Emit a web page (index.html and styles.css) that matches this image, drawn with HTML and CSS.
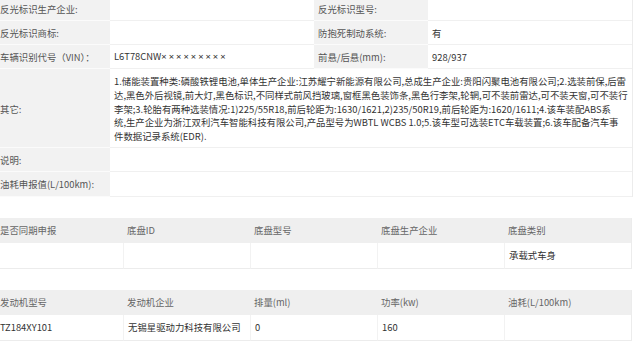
FILE: index.html
```html
<!DOCTYPE html>
<html lang="zh-CN">
<head>
<meta charset="utf-8">
<link rel="stylesheet" href="styles.css">
</head>
<body>
<div class="page">
  <table class="info">
    <colgroup><col class="c-l"><col class="c-v"><col class="c-l"><col class="c-v"></colgroup>
    <tr><td class="lab">反光标识生产企业:</td><td class="val"></td><td class="lab">反光标识型号:</td><td class="val"></td></tr>
    <tr><td class="lab">反光标识商标:</td><td class="val"></td><td class="lab">防抱死制动系统:</td><td class="val">有</td></tr>
    <tr><td class="lab">车辆识别代号（VIN）：</td><td class="val">L6T78CNW<span class="mask">×××××××××</span></td><td class="lab">前悬/后悬(mm):</td><td class="val">928/937</td></tr>
    <tr class="tall"><td class="lab">其它:</td><td class="val multi" colspan="3">1.储能装置种类:磷酸铁锂电池,单体生产企业:江苏耀宁新能源有限公司,总成生产企业:贵阳闪聚电池有限公司;2.选装前保,后雷<br>达,黑色外后视镜,前大灯,黑色标识,不同样式前风挡玻璃,窗框黑色装饰条,黑色行李架,轮辋,可不装前雷达,可不装天窗,可不装行<br>李架;3.轮胎有两种选装情况:1)225/55R18,前后轮距为:1630/1621,2)235/50R19,前后轮距为:1620/1611;4.该车装配ABS系<br>统,生产企业为浙江双利汽车智能科技有限公司,产品型号为WBTL WCBS 1.0;5.该车型可选装ETC车载装置;6.该车配备汽车事<br>件数据记录系统(EDR).</td></tr>
    <tr class="wide"><td class="lab">说明:</td><td class="val" colspan="3"></td></tr>
    <tr class="wide"><td class="lab">油耗申报值(L/100km):</td><td class="val" colspan="3"></td></tr>
  </table>

  <table class="grid">
    <tr class="head"><td>是否同期申报</td><td>底盘ID</td><td>底盘型号</td><td>底盘生产企业</td><td>底盘类别</td></tr>
    <tr class="data"><td></td><td></td><td></td><td></td><td>承载式车身</td></tr>
  </table>

  <table class="grid">
    <tr class="head"><td>发动机型号</td><td>发动机企业</td><td>排量(ml)</td><td>功率(kw)</td><td>油耗(L/100km)</td></tr>
    <tr class="data"><td>TZ184XY101</td><td>无锡星驱动力科技有限公司</td><td>0</td><td>160</td><td></td></tr>
  </table>
</div>
</body>
</html>
```

FILE: styles.css
```css
html, body {
  margin: 0;
  padding: 0;
  background: #fff;
}

body {
  font-family: "Noto Sans CJK SC", "Noto Sans", sans-serif;
  font-size: 9.4px;
  color: #333;
  overflow: hidden;
}

.page {
  width: 636px;
  margin: -3px 0 0 -4px;
  display: flex;
  flex-direction: column;
  gap: 21px;
}

table {
  width: 636px;
  table-layout: fixed;
  border-collapse: separate;
  border-spacing: 0;
  border-right: 1px solid #ececec;
}

td {
  padding: 0 4px;
  vertical-align: middle;
  white-space: nowrap;
  overflow: hidden;
  line-height: 14px;
}

.c-l { width: 114px; }
.c-v { width: 204px; }

.info td {
  height: 23px;
  border-bottom: 1px solid #f0f0f0;
}

.info .lab {
  background: #f2f2f2;
  color: #555;
  border-bottom: 1px solid #fbfbfb;
}

.info .val {
  color: #333;
}

.mask {
  font-family: "Noto Sans", sans-serif;
  letter-spacing: 2px;
}

.info .tall td {
  height: auto;
  padding-top: 6px;
  padding-bottom: 3px;
}

.info .multi {
  line-height: 13.8px;
}

.info .wide td {
  height: 23.5px;
}

.grid .head td {
  background: #efefef;
  color: #666;
  height: 25px;
}

.grid .data td {
  height: 25px;
  color: #333;
  border-bottom: 1px solid #ececec;
  border-left: 1px solid #f2f2f2;
}

.grid .data td:first-child {
  border-left: 0;
}
```
